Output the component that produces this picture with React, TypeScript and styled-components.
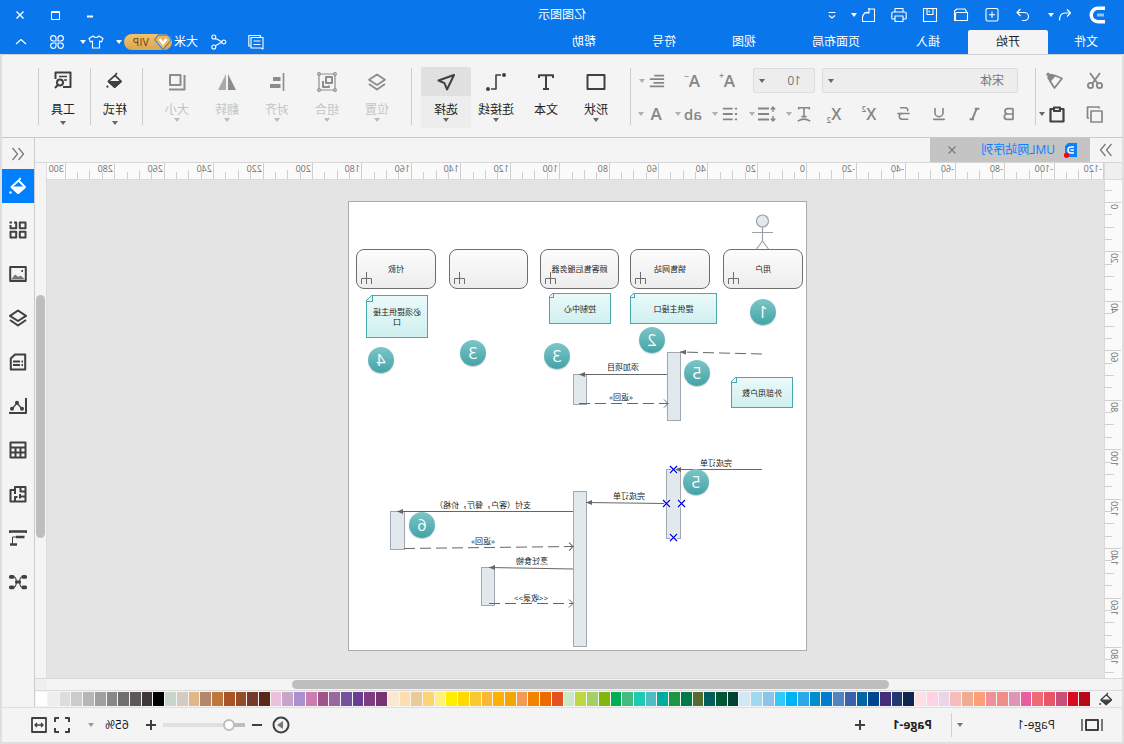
import React from "react";
import styled, { createGlobalStyle, css } from "styled-components";
import { Bold, Underline, Strikethrough } from "lucide-react";

const GlobalStyle = createGlobalStyle`
  *, *::before, *::after { box-sizing: border-box; }
  body { margin: 0; background: #f4f4f4; }
  button, select, input {
    font: inherit;
    color: inherit;
    margin: 0;
    padding: 0;
    border: 0;
    background: none;
  }
`;

const blue = "#0977eb";
const dark = "#404040";
const mid = "#868686";
const line = "#d0d0d0";

/* ---------- shell ---------- */

/* The whole window is shown flipped left to right. */
const Window = styled.div`
  display: flex;
  flex-direction: column;
  min-height: 100vh;
  overflow: hidden;
  transform: scaleX(-1);
  background: #f4f4f4;
  color: #222;
  font: 12px/16px "Open Sans", "Noto Sans CJK SC", sans-serif;
`;

const Header = styled.header`
  background: ${blue};
  color: #fff;
`;

const TitleRow = styled.div`
  display: grid;
  grid-template-columns: 1fr auto 1fr;
  align-items: center;
  height: 30px;
`;

const QuickBar = styled.div`
  display: flex;
  align-items: center;
  gap: 15px;
  padding-left: 18px;
`;

const Split = styled.div<{ $gap?: number }>`
  display: flex;
  align-items: center;
  gap: ${(p) => p.$gap ?? 1}px;
`;

const Title = styled.h1`
  margin: 0;
  font-size: 12px;
  font-weight: 400;
`;

const WindowControls = styled.div`
  display: flex;
  justify-content: flex-end;
  padding-right: 3px;
`;

const IconButton = styled.button<{ $w?: number; $before?: number; $color?: string }>`
  display: flex;
  flex: none;
  align-items: center;
  justify-content: center;
  width: ${(p) => p.$w ?? 16}px;
  height: 24px;
  margin-left: ${(p) => p.$before ?? 0}px;
  color: ${(p) => p.$color ?? "inherit"};
  white-space: nowrap;
`;

const MenuRow = styled.nav`
  display: flex;
  align-items: stretch;
  height: 24px;
`;

const MenuTab = styled.button<{ $active?: boolean; $first?: boolean }>`
  padding: 0 ${(p) => (p.$first ? 26 : 28)}px;
  ${(p) =>
    p.$active &&
    css`
      background: #f4f4f4;
      color: #222;
      border-radius: 2px 2px 0 0;
    `}
`;

const Account = styled.div`
  display: flex;
  align-items: center;
  margin-left: auto;
  padding-right: 13px;
`;

const UserName = styled.span`
  margin: 0 2px 0 13px;
`;

const VipBadge = styled.button`
  display: flex;
  align-items: center;
  gap: 5px;
  width: 48px;
  height: 16px;
  border-radius: 8px;
  background: linear-gradient(#f3c26c, #d9a653);
  color: #6b4410;
  font-size: 11px;
`;

const CaretShape = styled.span<{ $color: string }>`
  width: 0;
  height: 0;
  border: 3px solid transparent;
  border-top: 4px solid ${(p) => p.$color};
  border-bottom: 0;
`;

const Caret = ({ color = "#fff", label = "更多" }: { color?: string; label?: string }) => (
  <IconButton $w={10} aria-label={label}>
    <CaretShape $color={color} />
  </IconButton>
);

/* ---------- ribbon ---------- */

const Ribbon = styled.div`
  display: flex;
  align-items: flex-start;
  height: 84px;
  padding-top: 12px;
  border: 2px solid #dfdfdf;
  border-width: 1px 2px;
  border-top-color: ${line};
  border-bottom-color: #c9c9c9;
`;

const Divider = styled.i`
  flex: none;
  width: 1px;
  height: 57px;
  margin-top: 1px;
  background: #cdcdcd;
`;

const ToolRows = styled.div<{ $w: number; $pad: number }>`
  display: flex;
  flex: none;
  flex-direction: column;
  gap: 8px;
  width: ${(p) => p.$w}px;
  padding: 1px 0 0 ${(p) => p.$pad}px;
`;

const ToolRow = styled.div<{ $gap: number }>`
  display: flex;
  align-items: center;
  gap: ${(p) => p.$gap}px;
  height: 25px;
  color: ${mid};
`;

const LetterTools = styled(ToolRow)`
  padding-right: 4px;
`;

const SelectBox = styled.div<{ $w: number }>`
  position: relative;
  flex: none;
  width: ${(p) => p.$w}px;

  select {
    appearance: none;
    width: 100%;
    height: 25px;
    padding-left: 13px;
    border: 1px solid #dcdce0;
    border-radius: 2px;
    background: #ededed;
    color: #777;
  }

  span {
    position: absolute;
    top: 11px;
    right: 6px;
    pointer-events: none;
  }
`;

const Letter = styled.span<{ $size?: number }>`
  font: 600 ${(p) => p.$size ?? 17}px/20px "Open Sans", sans-serif;

  sup, sub {
    font-size: 8px;
    line-height: 8px;
  }
  sup { vertical-align: 8px; }
  sub { vertical-align: -3px; }
`;

const BigGroup = styled.div<{ $gap?: number }>`
  display: flex;
  flex: none;
  margin: 0 ${(p) => (p.$gap === undefined ? 9 : 0)}px 0 ${(p) => p.$gap ?? 9}px;
`;

const BigButton = styled.button<{ $active?: boolean; $muted?: boolean; $w?: number; $gap?: number }>`
  display: flex;
  flex-direction: column;
  align-items: center;
  gap: ${(p) => p.$gap ?? 0}px;
  width: ${(p) => p.$w ?? 50}px;
  height: 61px;
  border-radius: 2px;
  color: ${(p) => (p.$muted ? "#c4c4c4" : "#222")};
  background: ${(p) => (p.$active ? "linear-gradient(#e0e0e0 29px, #ededed 29px)" : "none")};
`;

const BigIcon = styled.span<{ $muted?: boolean; $h?: number }>`
  display: flex;
  align-items: center;
  justify-content: center;
  height: ${(p) => p.$h ?? 29}px;
  margin-bottom: 6px;
  color: ${(p) => (p.$muted ? "#8c8c8c" : dark)};
`;

/* ---------- workspace ---------- */

const Body = styled.div`
  display: flex;
  flex: 1;
  border: 0 solid #dfdfdf;
  border-width: 0 2px;
`;

const Main = styled.main`
  display: flex;
  flex: 1;
  flex-direction: column;
  min-width: 0;
`;

const DocTabs = styled.div`
  display: flex;
  height: 25px;
  border-bottom: 1px solid #d8d8d8;
`;

const DocTab = styled.div`
  display: flex;
  align-items: center;
  width: 160px;
  padding: 0 14px 0 12px;
  background: #c4c4c4;
  color: #0a80ff;

  span { margin: 0 auto 0 9px; }
`;

const Workspace = styled.div`
  display: grid;
  flex: 1;
  grid-template-columns: 18px 1fr 12px;
  grid-template-rows: 17px 1fr;
  min-height: 0;
`;

const Corner = styled.div`
  background: #efefef;
  border: 1px solid #dadada;
  border-width: 0 1px 1px 0;
`;

const HRuler = styled.div`
  display: flex;
  contain: size;
  overflow: hidden;
  background: #fafafa;
  border-bottom: 1px solid #dadada;
`;

const VRuler = styled.div`
  display: flex;
  flex-direction: column;
  contain: size;
  padding-top: 10px;
  overflow: hidden;
  background: #fafafa;
  border-right: 1px solid #dadada;
`;

const tickLength = [16, 7, 9, 7];

const HCell = styled.span<{ $kind: number }>`
  position: relative;
  flex: none;
  background: linear-gradient(#cfcfcf, #cfcfcf) left bottom / 1px ${(p) => tickLength[p.$kind]}px no-repeat;
`;

const VCell = styled.span<{ $kind: number }>`
  position: relative;
  flex: none;
  background: linear-gradient(#cfcfcf, #cfcfcf) right top / ${(p) => tickLength[p.$kind]}px 1px no-repeat;
`;

const RulerText = styled.span<{ $vertical?: boolean }>`
  position: absolute;
  top: ${(p) => (p.$vertical ? 2 : 0)}px;
  left: 2px;
  color: #707070;
  font-size: 9px;
  line-height: 11px;
  ${(p) =>
    p.$vertical &&
    css`
      writing-mode: vertical-rl;
      transform: rotate(180deg);
    `}
`;

const VScroll = styled.div`
  display: grid;
  grid-row: 1 / 3;
  grid-column: 3;
  grid-template-rows: 132fr 243fr 140fr;
  padding: 0 1px;
  border-left: 1px solid #dedede;
`;

const HScroll = styled.div`
  display: grid;
  grid-template-columns: 233fr 597fr 245fr 12px;
  height: 13px;
  border: 0 solid #dadada;
  border-width: 1px 0;
`;

const Thumb = styled.i<{ $col?: boolean }>`
  grid-area: ${(p) => (p.$col ? "1 / 2" : "2 / 1")};
  margin: ${(p) => (p.$col ? "1px 0" : "0")};
  border-radius: 5px;
  background: #bebebe;
`;

const ScrollCorner = styled.i`
  grid-area: 1 / 4;
  background: #efefef;
`;

const Canvas = styled.div`
  min-width: 0;
  padding: 21px 0 27px 297px;
  overflow: hidden;
  background: #e4e4e4;
`;

const Page = styled.div`
  position: relative;
  width: 459px;
  height: 450px;
  border: 1px solid #ababab;
  background: #fff;
  color: #222;
  font-size: 8px;
  line-height: 10px;
`;

interface Place {
  $x: number;
  $y: number;
  $w: number;
  $h: number;
}

const placed = css<Place>`
  position: absolute;
  left: ${(p) => p.$x}px;
  top: ${(p) => p.$y}px;
  width: ${(p) => p.$w}px;
  height: ${(p) => p.$h}px;
`;

const Lifeline = styled.div<Place>`
  ${placed}
  display: flex;
  align-items: center;
  justify-content: center;
  border: 1px solid #6e6e6e;
  border-radius: 8px;
  background: linear-gradient(#fcfcfc, #ededed);

  svg {
    position: absolute;
    right: 4px;
    bottom: 4px;
  }
`;

const Note = styled.div<Place & { $ear: number }>`
  ${placed}
  display: flex;
  align-items: center;
  justify-content: center;
  padding: 0 4px;
  border: 1px solid #4aa8ab;
  background: linear-gradient(#ebf9f9, #cff0f0);
  text-align: center;

  &::after {
    content: "";
    position: absolute;
    top: -1px;
    right: -1px;
    width: ${(p) => p.$ear}px;
    height: ${(p) => p.$ear}px;
    border: 1px solid #4aa8ab;
    border-width: 0 0 1px 1px;
    background: linear-gradient(45deg, #ebf9f9 45%, #4aa8ab 45% 58%, #fff 58%);
  }
`;

const Activation = styled.div<Place>`
  ${placed}
  border: 1px solid #a0a6b2;
  background: #e1e9ec;
`;

const Badge = styled.div<{ $x: number; $y: number }>`
  position: absolute;
  left: ${(p) => p.$x - 13}px;
  top: ${(p) => p.$y - 13}px;
  width: 26px;
  height: 26px;
  border-radius: 50%;
  background: linear-gradient(#7cc6c8, #43a3a7);
  box-shadow: 0 1px 1px #0003;
  color: #fff;
  font: 16px/26px "Open Sans", sans-serif;
  text-align: center;
`;

const Message = styled.span<{ $x: number; $y: number }>`
  position: absolute;
  left: ${(p) => p.$x - 60}px;
  top: ${(p) => p.$y - 5}px;
  width: 120px;
  text-align: center;
`;

const Overlay = styled.svg`
  position: absolute;
  inset: 0;
`;

/* ---------- side, palette, status ---------- */

const Sidebar = styled.aside`
  display: flex;
  flex: none;
  flex-direction: column;
  gap: 10px;
  width: 33px;
  border-left: 1px solid #cbcbcb;
`;

const SideToggle = styled.button`
  display: flex;
  align-items: center;
  justify-content: center;
  height: 31px;
  margin-bottom: -10px;
  color: #777;
`;

const SideButton = styled.button<{ $active?: boolean }>`
  display: flex;
  align-items: center;
  justify-content: center;
  height: 34px;
  background: ${(p) => (p.$active ? "#0080ff" : "none")};
  color: ${(p) => (p.$active ? "#fff" : dark)};
`;

const Palette = styled.div`
  display: flex;
  height: 16px;
  padding: 1px 1px 1px 0;
`;

const PaletteIcon = styled.button`
  display: flex;
  flex: none;
  align-items: center;
  justify-content: center;
  width: 32px;
  color: ${dark};
`;

const Swatches = styled.div`
  display: flex;
  flex: 1;
  gap: 1px;
`;

const Swatch = styled.button<{ $fill: string }>`
  flex: 1;
  background: ${(p) => p.$fill};
`;

const Status = styled.footer`
  display: flex;
  align-items: center;
  height: 37px;
  border: 2px solid #dfdfdf;
  border-top-width: 1px;
  color: #222;
`;

const PageTab = styled.button<{ $bold?: boolean; $w: number; $pad?: number }>`
  width: ${(p) => p.$w}px;
  padding-left: ${(p) => p.$pad ?? 0}px;
  text-align: left;
  font-weight: ${(p) => (p.$bold ? 700 : 400)};
`;

const StatusDivider = styled.i`
  width: 1px;
  height: 24px;
  margin: 0 19px 0 3px;
  background: ${line};
`;

const ZoomTools = styled.div`
  display: flex;
  align-items: center;
  margin-left: auto;
  padding-right: 29px;
`;

const Slider = styled.input`
  appearance: none;
  width: 82px;
  height: 12px;
  margin: 0 4px;
  background: linear-gradient(90deg, #bebebe 16px, #dfdfdf 16px) center / 100% 4px no-repeat;

  &::-webkit-slider-thumb {
    appearance: none;
    width: 12px;
    height: 12px;
    border: 2px solid #bebebe;
    border-radius: 50%;
    background: #fff;
  }
`;

const ZoomValue = styled.span`
  margin: 0 9px 0 14px;
  color: #111;
`;

/* ---------- icons ---------- */

const Glyph = ({
  children,
  size = 18,
  sw = 2,
  box = 18,
}: {
  children: React.ReactNode;
  size?: number;
  sw?: number;
  box?: number;
}) => (
  <svg
    width={size}
    height={size}
    viewBox={`0 0 ${box} ${box}`}
    fill="none"
    stroke="currentColor"
    strokeWidth={sw}
    strokeLinejoin="round"
    aria-hidden
  >
    {children}
  </svg>
);

const Thin = ({ d, size = 16 }: { d: string; size?: number }) => (
  <Glyph size={size} box={16} sw={1.1}>
    <path d={d} />
  </Glyph>
);

const Bucket = ({ size = 18 }: { size?: number }) => (
  <Glyph size={size} sw={1.8}>
    <path d="M6.5 1 8.5 4 M8.5 3.5 2 10 8.8 16 15.5 10Z" />
    <path d="M2.5 10.5H15L8.8 16Z" fill="currentColor" />
    <circle cx="16.5" cy="15.5" r="1.2" fill="currentColor" stroke="none" />
  </Glyph>
);

const Layers = ({ sw = 2 }: { sw?: number }) => (
  <Glyph sw={sw}>
    <path d="M9 1.5 17 6.8 9 12 1 6.8Z M1 11 9 16.5 17 11" />
  </Glyph>
);

const quickIcons: [string, string][] = [
  ["重做", "M10.5 2 14 5.5 10.5 9 M14 5.5H6.5A3.6 3.6 0 0 0 6.5 13.5H9"],
  ["新建", "M3.5 1.5H12.5Q14 1.5 14 3V12.5Q14 14 12.5 14H3.5Q2 14 2 12.5V3Q2 1.5 3.5 1.5Z M8 4.5V11 M4.8 7.8H11.2"],
  ["打开", "M1.5 13.5V5.5H12Q13.5 5.5 13.5 7V13.5Z M2 5.5 4 2H12L14.5 4V13.5H13.5"],
  ["保存", "M1.5 1.5H14.5V14.5H1.5Z M5 1.5V7.5H11V1.5 M8.8 3.5V5.5"],
  ["打印", "M4 5V1.5H12V5 M4 12H1.5Q.8 12 .8 11V6.5Q.8 5 2.2 5H13.8Q15.2 5 15.2 6.5V11Q15.2 12 14.5 12H12 M4 9H12V14.5H4Z"],
];

const bigMain = [
  { label: "形状", icon: <Glyph size={20} box={20}><path d="M1.5 3H18.5V17H1.5Z" /></Glyph>, caret: true },
  { label: "文本", icon: <Glyph><path d="M2 5V2.2H16V5 M9 2.2V16 M6 16H12" /></Glyph>, caret: false },
  {
    label: "连接线",
    icon: (
      <Glyph size={20} box={20} sw={1.6}>
        <path d="M5 3H10V17H15" />
        <circle cx="2" cy="3" r="2" fill="currentColor" stroke="none" />
        <circle cx="18" cy="17" r="2" fill="currentColor" stroke="none" />
      </Glyph>
    ),
    caret: true,
  },
  { label: "选择", icon: <Glyph><path d="M1 2 16.5 7.5 10.5 10.2 8 16.5Z" /></Glyph>, caret: true, active: true },
];

const bigArrange = [
  { label: "位置", icon: <Layers sw={1.8} /> },
  {
    label: "组合",
    icon: (
      <Glyph size={20} box={20} sw={1.2}>
        <path d="M2 2H18V18H2Z" />
        <path d="M5 5H11V11H5Z M14 9V15H8V13.5" strokeWidth="2" />
        <g fill="#f4f4f4">
          <circle cx="2" cy="2" r="1.3" />
          <circle cx="18" cy="2" r="1.3" />
          <circle cx="2" cy="18" r="1.3" />
          <circle cx="18" cy="18" r="1.3" />
        </g>
      </Glyph>
    ),
  },
  {
    label: "对齐",
    icon: (
      <Glyph sw={1.6}>
        <path d="M2.5 0V18" />
        <path d="M5.5 6H13 M5.5 13H16" strokeWidth="4" />
      </Glyph>
    ),
  },
  {
    label: "翻转",
    icon: (
      <Glyph sw={0}>
        <path d="M8 1V17H0Z" fill="currentColor" />
        <path d="M10 1V17H18Z" fill="#aaa" />
      </Glyph>
    ),
  },
  { label: "大小", icon: <Glyph><path d="M5.5 2H16V12H5.5Z M1.5 2V16.5H17" /></Glyph> },
];

const bigTools = [
  { label: "样式", icon: <Bucket size={17} /> },
  {
    label: "工具",
    icon: (
      <Glyph>
        <path d="M9 16H1.5V1.5H16.5V8" />
        <path d="M5 5.5H13 M5 9H8" strokeWidth="1.6" />
        <circle cx="12" cy="11.5" r="3" />
        <path d="M14 13.8 17 17" />
      </Glyph>
    ),
  },
];

const sideIcons: [string, React.ReactNode][] = [
  ["填充", <Bucket />],
  [
    "符号库",
    <Glyph>
      <path d="M1.5 1.5H7.2V7.2H1.5Z M1.5 10.8H7.2V16.5H1.5Z M10.8 10.8H16.5V16.5H10.8Z M13 1.5H10.8V7.2H16.5V4 M16.5 2.5V.5 M15 1.5H17" />
    </Glyph>,
  ],
  [
    "图片",
    <Glyph>
      <path d="M1.2 2H16.8V16H1.2Z" />
      <path d="M2 14.5 6.5 10.5 8.5 12 12 9.5 16 14.5Z" fill="currentColor" stroke="none" opacity=".7" />
      <path d="M4 6H5.6" />
    </Glyph>,
  ],
  ["图层", <Layers />],
  [
    "属性",
    <Glyph>
      <path d="M1.8 1.5H12L16.2 5.5V16.5H1.8Z" />
      <path d="M4 8.5H5.5 M7 8.5H14 M4 12H5.5 M7 12H14" strokeWidth="1.8" />
    </Glyph>,
  ],
  [
    "图表",
    <Glyph>
      <path d="M1 1V16H18" />
      <path d="M5 12 10 6 15 12" strokeWidth="1.2" />
      <g fill="currentColor" stroke="none">
        <circle cx="5" cy="11.8" r="2" />
        <circle cx="10" cy="5.8" r="2" />
        <circle cx="15" cy="11.8" r="2" />
      </g>
    </Glyph>,
  ],
  ["表格", <Glyph><path d="M1.5 1.5H16.5V16.5H1.5Z M1.5 6.5H16.5 M1.5 11.5H16.5 M6.5 6.5V16.5 M11.5 6.5V16.5" /></Glyph>],
  [
    "平面图",
    <Glyph>
      <path d="M1.5 2H12V5H16.5V16.5H1.5Z M6.5 2V6.5H1.5 M12 5V9 M1.5 11.5H7V9 M7 11.5V13.5 M12 16V12H9.5" />
    </Glyph>,
  ],
  [
    "甘特图",
    <Glyph>
      <path d="M.5 4V2.5H17.5V4" strokeWidth="2.4" />
      <path d="M2.5 8H11 M10 15.5H17" strokeWidth="2.6" />
      <path d="M10 8H14.5V15" strokeWidth="1" />
    </Glyph>,
  ],
  [
    "思维导图",
    <Glyph sw={1.2}>
      <path d="M2 4H5Q7 4 7.5 9 7 14 5 14H2 M16 4H13Q11 4 10.5 9 11 14 13 14H16" />
      <g fill="currentColor" stroke="none">
        <rect x="0" y="2" width="5.5" height="3.8" rx="1.5" />
        <rect x="12.5" y="2" width="5.5" height="3.8" rx="1.5" />
        <rect x="0" y="12.5" width="5.5" height="3.8" rx="1.5" />
        <rect x="12.5" y="12.5" width="5.5" height="3.8" rx="1.5" />
        <rect x="6" y="7.6" width="6" height="3" rx="1" />
      </g>
    </Glyph>,
  ],
];

/* ---------- data ---------- */

const swatches = (
  "b80916 da0b1e c9507a e8566a ed6c74 e75f9e e095b8 ef8f88 f09098 ff9f78 f0ab94 f6bdbb ebd5e8 ffd3e5 ffdfe4 " +
  "0f244e 223a72 432d79 00468f 0067a6 3d62ad 5483c4 007dcf 008ed0 2ea8e4 00b3f3 33c9fc 8bc3ed 9fd9ef " +
  "cfe9f6 004233 005733 005f5b 556b2f 007a49 1c9641 00ac9f 50bdc4 19ccb2 45ba7d 00af53 80b70f a4d065 bfd743 cde8c6 " +
  "e3521f ed6a00 f08300 f39a55 f2a600 ffb000 fdb735 fac931 ffd900 ffee00 fff17f ffd573 eacb96 ffdeae fce8d0 793270 " +
  "7f3c84 674095 73539a 9a679f 9e5688 cd7caf a991cf c7a4c9 eac0db 5a2819 743a2e 934d29 a85424 c0773e b4866b dfb886 " +
  "d5cac4 c9d4ca 000000 3f3839 5a5859 6e7070 888888 9fa09f b5b6b6 cacccb dcdddd eeeeee ffffff"
).split(" ");

const tickStep = 12.36;

const ruler = (from: number, count: number, origin: number) =>
  Array.from({ length: count }, (_, i) => {
    const k = from + i;
    return {
      k,
      kind: ((k % 4) + 4) % 4,
      size: Math.round((k + 1) * tickStep) - Math.round(k * tickStep),
      label: origin + k * 5,
    };
  });

const lifelines: [number, number, string][] = [
  [3, 80, "用户"],
  [96, 80, "销售网站"],
  [187, 79, "顾客售后服务器"],
  [278, 79, ""],
  [370, 80, "付款"],
];

const notes: [number, number, number, number, string, number][] = [
  [89, 91, 87, 31, "提供主接口", 5],
  [195, 91, 62, 31, "控制中心", 5],
  [378, 93, 62, 43, "必须提供主接口", 7],
  [13, 175, 62, 31, "外部用户数", 6],
];

const activations: [number, number, number, number][] = [
  [125, 150, 14, 69],
  [219, 172, 14, 31],
  [125, 267, 15, 70],
  [219, 289, 14, 156],
  [401, 309, 15, 39],
  [311, 365, 14, 39],
];

const badges: [number, number, number][] = [
  [43, 110, 1],
  [154, 138, 2],
  [249, 154, 3],
  [333, 151, 3],
  [425, 158, 4],
  [109, 171, 5],
  [110, 280, 5],
  [384, 323, 6],
];

const messages: [number, number, string][] = [
  [183, 165, "添加项目"],
  [185, 195, "«返回»"],
  [90, 261, "完成订单"],
  [177, 294, "完成订单"],
  [323, 303, "支付（客户，餐厅，价格）"],
  [323, 339, "«返回»"],
  [274, 359, "烹饪食物"],
  [275, 396, "<<收录>>"],
];

const solidArrows = [
  "M139 172.5H227",
  "M44 267.5H131",
  "M140 301.5 220 300.5",
  "M233 309.5H409",
  "M233 367 317 365.5",
];
const replyArrows = ["M227 201.5H138", "M402 346.5 233 344.5", "M317 401.5H233"];
const handles: [number, number][] = [
  [133, 267],
  [133, 335],
  [140, 301],
  [125, 301],
];

const Diagram = () => (
  <Page>
    {lifelines.map(([x, w, text]) => (
      <Lifeline key={x} $x={x} $y={47} $w={w} $h={40}>
        {text}
        <svg width="11" height="12" fill="none" stroke="#6e6e6e" aria-hidden>
          <path d="M5.5 0V12 M.5 12V6.5H10.5V12" />
        </svg>
      </Lifeline>
    ))}
    {notes.map(([x, y, w, h, text, ear]) => (
      <Note key={text} $x={x} $y={y} $w={w} $h={h} $ear={ear}>
        {text}
      </Note>
    ))}
    {activations.map(([x, y, w, h]) => (
      <Activation key={`${x}-${y}`} $x={x} $y={y} $w={w} $h={h} />
    ))}
    <Overlay width="457" height="448" fill="none" stroke="#666" aria-hidden>
      <defs>
        <marker id="solid" markerWidth="7" markerHeight="6" refX="6" refY="3" orient="auto" markerUnits="userSpaceOnUse">
          <path d="M0 .5 6 3 0 5.5Z" fill="#666" stroke="none" />
        </marker>
        <marker id="open" markerWidth="7" markerHeight="9" refX="5" refY="4.5" orient="auto" markerUnits="userSpaceOnUse">
          <path d="M1 .5 5 4.5 1 8.5" fill="none" stroke="#666" />
        </marker>
      </defs>
      <g stroke="#9aa0ac" strokeWidth="1.2">
        <circle cx="43.5" cy="19" r="6" fill="#e1e9ec" />
        <path d="M43.5 25V39 M33 30.5H54 M43.5 39 37.5 47 M43.5 39 49.5 47" />
      </g>
      <path d="M44 152 126 150" strokeDasharray="11 5" markerEnd="url(#solid)" />
      {solidArrows.map((d) => (
        <path key={d} d={d} markerEnd="url(#solid)" />
      ))}
      {replyArrows.map((d) => (
        <path key={d} d={d} strokeDasharray="11 5" markerEnd="url(#open)" />
      ))}
      {handles.map(([x, y]) => (
        <g key={`${x}-${y}`}>
          <path d={`M${x - 4} ${y - 3}l7 7m0-7l-7 7`} stroke="#fff" strokeWidth="3" />
          <path d={`M${x - 4} ${y - 3}l7 7m0-7l-7 7`} stroke="#0000d8" strokeWidth="1.2" />
        </g>
      ))}
    </Overlay>
    {badges.map(([x, y, n]) => (
      <Badge key={`${x}-${y}`} $x={x} $y={y}>
        {n}
      </Badge>
    ))}
    {messages.map(([x, y, text]) => (
      <Message key={`${x}-${y}`} $x={x} $y={y}>
        {text}
      </Message>
    ))}
  </Page>
);

const SplitTool = ({ label, children }: { label: string; children: React.ReactNode }) => (
  <Split>
    <IconButton $w={18} aria-label={label}>
      {children}
    </IconButton>
    <Caret color="#b0b0b0" label={`${label}选项`} />
  </Split>
);

export default function App() {
  return (
    <Window>
      <GlobalStyle />
      <Header>
        <TitleRow>
          <QuickBar>
            <svg width="18" height="18" viewBox="0 0 18 18" fill="none" aria-hidden>
              <path d="M1 2.2H8A6.3 6.3 0 0 1 8 15.8H1" stroke="#fff" strokeWidth="3.4" />
              <path d="M2 9H9" stroke="#8cc4ff" strokeWidth="3" />
            </svg>
            <Split>
              <IconButton aria-label="撤销">
                <Thin d="M6 2.5 2.5 6 6 9.5 M2.5 6H8Q13.5 6 13.5 13.5" />
              </IconButton>
              <Caret />
            </Split>
            {quickIcons.map(([label, d]) => (
              <IconButton key={label} aria-label={label}>
                <Thin d={d} />
              </IconButton>
            ))}
            <Split>
              <IconButton aria-label="导出">
                <Thin d="M8 2H1.5V14.5H13.5V10 M7 1V6H12 M7.5 5.5Q12 4.5 13.5 10" />
              </IconButton>
              <Caret />
              <IconButton $before={8} aria-label="自定义">
                <Thin d="M4.5 5.5H11.5 M5 8.5 8 11 11 8.5" />
              </IconButton>
            </Split>
          </QuickBar>
          <Title>亿图图示</Title>
          <WindowControls>
            <IconButton $w={35} aria-label="最小化">
              <Glyph size={10} box={10}><path d="M2 6.5H8" /></Glyph>
            </IconButton>
            <IconButton $w={35} aria-label="最大化">
              <Glyph size={9} box={9} sw={1}><path d="M.5 .5H8.5V8.5H.5Z M.5 1.5H8.5" /></Glyph>
            </IconButton>
            <IconButton $w={35} aria-label="关闭">
              <Glyph size={10} box={10} sw={1.4}><path d="M1.5 1.5 8.5 8.5 M8.5 1.5 1.5 8.5" /></Glyph>
            </IconButton>
          </WindowControls>
        </TitleRow>
        <MenuRow>
          <MenuTab $first>文件</MenuTab>
          <MenuTab $active>开始</MenuTab>
          {["插入", "页面布局", "视图", "符号", "帮助"].map((t) => (
            <MenuTab key={t}>{t}</MenuTab>
          ))}
          <Account>
            <IconButton aria-label="消息">
              <Thin d="M3.5 3V1.5H15.2V12H13.5 M1 3.5H13V14H3L1 15Z M3.5 7H10.5 M3.5 10.5H10.5" />
            </IconButton>
            <IconButton $before={21} aria-label="分享">
              <Thin d="M5 8 12 4 M5 8 12 12 M1.2 8A2 2 0 1 0 5.2 8A2 2 0 1 0 1.2 8 M11.2 3A2 2 0 1 0 15.2 3A2 2 0 1 0 11.2 3 M11.2 13A2 2 0 1 0 15.2 13A2 2 0 1 0 11.2 13" />
            </IconButton>
            <UserName>大米</UserName>
            <VipBadge>
              <svg width="18" height="16" viewBox="0 0 18 16" aria-hidden>
                <path d="M4 1H14L17.3 6 9 15.5 .7 6Z" fill="#e9b660" stroke={blue} />
                <path d="M5.5 5 9 9.5 12.5 5" fill="none" stroke="#fff" strokeWidth="2.4" />
              </svg>
              VIP
            </VipBadge>
            <Caret />
            <IconButton $before={10} aria-label="主题">
              <Thin d="M5 2 1 4.5 2.5 8 4.5 7V14H11.5V7L13.5 8 15 4.5 11 2Q8 5 5 2Z" />
            </IconButton>
            <Caret />
            <IconButton $before={13} aria-label="应用">
              <Thin d="M7 7H4A2.7 2.7 0 1 1 7 4Z M9 7H12A2.7 2.7 0 1 0 9 4Z M7 9H4A2.7 2.7 0 1 0 7 12Z M9 9H12A2.7 2.7 0 1 1 9 12Z" />
            </IconButton>
            <IconButton $before={20} aria-label="收起">
              <Thin d="M3 10 8 5.5 13 10" />
            </IconButton>
          </Account>
        </MenuRow>
      </Header>

      <Ribbon>
        <ToolRows $w={86} $pad={18}>
          <ToolRow $gap={22}>
            <IconButton $w={18} aria-label="剪切">
              <Glyph sw={1.8}>
                <path d="M4 1 12 12 M14 1 6 12" />
                <circle cx="4.5" cy="13.5" r="2.6" />
                <circle cx="13.5" cy="13.5" r="2.6" />
              </Glyph>
            </IconButton>
            <IconButton $w={18} aria-label="格式刷">
              <Glyph sw={1.8}>
                <path d="M2 6.5 9 3.5 14 9 9.5 16Z" />
                <path d="M9 3 14.5 9.5 17 5.5 13 1.5Z" fill="currentColor" stroke="none" />
                <path d="M13.5 4.5 17 1.5" strokeWidth="3" />
              </Glyph>
            </IconButton>
          </ToolRow>
          <ToolRow $gap={20}>
            <IconButton $w={18} aria-label="复制">
              <Glyph sw={1.7}><path d="M2 6H13V17H2Z M5 3.5V2H16.5V13H15" /></Glyph>
            </IconButton>
            <Split>
              <IconButton $w={18} $color={dark} aria-label="粘贴">
                <Glyph sw={2.2}><path d="M5.5 4H2.5V16.5H15.5V4H12.5 M6 2.5H12V6H6Z" /></Glyph>
              </IconButton>
              <Caret color="#666" />
            </Split>
          </ToolRow>
        </ToolRows>
        <Divider />
        <ToolRows $w={404} $pad={17}>
          <ToolRow $gap={17}>
            <Split $gap={7}>
              <SelectBox $w={196}>
                <select aria-label="字体"><option>宋体</option></select>
                <CaretShape $color="#666" />
              </SelectBox>
              <SelectBox $w={62}>
                <select aria-label="字号"><option>10</option></select>
                <CaretShape $color="#666" />
              </SelectBox>
            </Split>
            <IconButton $w={18} aria-label="增大字号"><Letter>A<sup>+</sup></Letter></IconButton>
            <IconButton $w={18} aria-label="减小字号"><Letter>A<sup>−</sup></Letter></IconButton>
            <SplitTool label="对齐方式">
              <Glyph size={16}><path d="M1 3H12 M1 7H17 M1 11H13 M1 15H17" /></Glyph>
            </SplitTool>
          </ToolRow>
          <ToolRow $gap={8}>
            <LetterTools $gap={17}>
              <IconButton $w={18} aria-label="加粗"><Bold size={16} strokeWidth={2.6} /></IconButton>
              <IconButton $w={18} aria-label="斜体">
                <Glyph size={16} sw={2.2}><path d="M3 3H8 M6 3 11 15 M9 15H14" /></Glyph>
              </IconButton>
              <IconButton $w={18} aria-label="下划线"><Underline size={16} strokeWidth={2.4} /></IconButton>
              <IconButton $w={18} aria-label="删除线"><Strikethrough size={17} strokeWidth={2.2} /></IconButton>
              <IconButton $w={18} aria-label="上标"><Letter $size={16}>X<sup>2</sup></Letter></IconButton>
              <IconButton $w={18} aria-label="下标"><Letter $size={16}>X<sub>2</sub></Letter></IconButton>
            </LetterTools>
            <SplitTool label="文字效果">
              <Glyph size={16} sw={1.8}><path d="M3 4V2H15V4 M9 2V12 M6 12H12 M2 17Q9 12.5 16 17" /></Glyph>
            </SplitTool>
            <SplitTool label="行距">
              <Glyph sw={1.8}>
                <path d="M7 3.5H18 M7 9H18 M7 14.5H18" />
                <path d="M3 2V7 M.8 4.5 3 2 5.2 4.5 M3 11V16 M.8 13.5 3 16 5.2 13.5" strokeWidth="1.4" />
              </Glyph>
            </SplitTool>
            <SplitTool label="项目符号">
              <Glyph size={16}><path d="M6 3H17 M6 9H17 M6 15H17 M1 3H3.5 M1 9H3.5 M1 15H3.5" /></Glyph>
            </SplitTool>
            <SplitTool label="突出显示"><Letter $size={15}>ab</Letter></SplitTool>
            <SplitTool label="字体颜色"><Letter>A</Letter></SplitTool>
          </ToolRow>
        </ToolRows>
        <Divider />
        <BigGroup>
          {bigMain.map((b) => (
            <BigButton key={b.label} $active={b.active}>
              <BigIcon>{b.icon}</BigIcon>
              {b.label}
              {b.caret && <CaretShape $color="#666" />}
            </BigButton>
          ))}
        </BigGroup>
        <Divider />
        <BigGroup>
          {bigArrange.map((b) => (
            <BigButton key={b.label} $muted>
              <BigIcon $muted>{b.icon}</BigIcon>
              {b.label}
              <CaretShape $color="#bbb" />
            </BigButton>
          ))}
        </BigGroup>
        <Divider />
        {bigTools.map((b) => (
          <React.Fragment key={b.label}>
            <BigGroup $gap={3}>
              <BigButton $w={48} $gap={3}>
                <BigIcon $h={26}>{b.icon}</BigIcon>
                {b.label}
                <CaretShape $color="#666" />
              </BigButton>
            </BigGroup>
            <Divider />
          </React.Fragment>
        ))}
      </Ribbon>

      <Body>
        <Main>
          <DocTabs>
            <IconButton $w={32} $color="#777" aria-label="展开">
              <Glyph size={14} box={14} sw={1.2}><path d="M1.5 1 6.5 7 1.5 13 M7.5 1 12.5 7 7.5 13" /></Glyph>
            </IconButton>
            <DocTab>
              <svg width="14" height="15" viewBox="0 0 14 15" fill="none" aria-hidden>
                <path d="M1 0H10L13 3V14H1Z" fill="#0a80ff" />
                <path d="M4 4H7A3 3 0 0 1 7 10H4 M4 7H7.5" stroke="#fff" strokeWidth="1.6" />
                <circle cx="11.5" cy="12.3" r="2.6" fill="#f00" />
              </svg>
              <span>UML网站序列</span>
              <IconButton $w={16} $color="#777" aria-label="关闭标签">
                <Glyph size={8} box={8} sw={1.1}><path d="M.5 .5 7.5 7.5 M7.5 .5 .5 7.5" /></Glyph>
              </IconButton>
            </DocTab>
          </DocTabs>
          <Workspace>
            <Corner />
            <HRuler>
              {ruler(0, 85, -120).map((t) => (
                <HCell key={t.k} $kind={t.kind} style={{ width: t.size }}>
                  {t.kind === 0 && <RulerText>{t.label}</RulerText>}
                </HCell>
              ))}
            </HRuler>
            <VScroll>
              <Thumb />
            </VScroll>
            <VRuler>
              {ruler(-1, 40, 0).map((t) => (
                <VCell key={t.k} $kind={t.kind} style={{ height: t.size }}>
                  {t.kind === 0 && <RulerText $vertical>{t.label}</RulerText>}
                </VCell>
              ))}
            </VRuler>
            <Canvas>
              <Diagram />
            </Canvas>
          </Workspace>
          <HScroll>
            <Thumb $col />
            <ScrollCorner />
          </HScroll>
          <Palette>
            <PaletteIcon aria-label="填充颜色">
              <Bucket size={14} />
            </PaletteIcon>
            <Swatches>
              {swatches.map((c) => (
                <Swatch key={c} $fill={`#${c}`} aria-label={`#${c}`} />
              ))}
            </Swatches>
          </Palette>
        </Main>
        <Sidebar>
          <SideToggle aria-label="折叠">
            <Glyph size={14} box={14} sw={1.2}><path d="M6.5 1 1.5 7 6.5 13 M12.5 1 7.5 7 12.5 13" /></Glyph>
          </SideToggle>
          {sideIcons.map(([label, icon], i) => (
            <SideButton key={label} $active={i === 0} aria-label={label}>
              {icon}
            </SideButton>
          ))}
        </Sidebar>
      </Body>

      <Status>
        <IconButton $w={24} $before={18} $color={dark} aria-label="页面视图">
          <Glyph size={22} box={22}><path d="M5 6H17V16H5Z" /><path d="M1 5V17 M21 5V17" stroke="#777" /></Glyph>
        </IconButton>
        <PageTab $w={115} $pad={25}>Page-1</PageTab>
        <Caret color="#777" />
        <StatusDivider />
        <PageTab $bold $w={64}>Page-1</PageTab>
        <IconButton $color={dark} aria-label="添加页面">
          <Glyph size={10} box={10}><path d="M5 0V10 M0 5H10" /></Glyph>
        </IconButton>
        <ZoomTools>
          <IconButton $w={18} $color={dark} aria-label="演示">
            <Glyph><circle cx="9" cy="9" r="7.5" /><path d="M7 5 13 9 7 13Z" fill="#777" stroke="none" /></Glyph>
          </IconButton>
          <IconButton $before={7} $color={dark} aria-label="缩小">
            <Glyph size={10} box={10}><path d="M0 5H10" /></Glyph>
          </IconButton>
          <Slider type="range" min={0} max={100} defaultValue={14} aria-label="缩放" />
          <IconButton $color={dark} aria-label="放大">
            <Glyph size={10} box={10}><path d="M5 0V10 M0 5H10" /></Glyph>
          </IconButton>
          <ZoomValue>65%</ZoomValue>
          <Caret color="#999" />
          <IconButton $before={16} $color={dark} aria-label="全屏">
            <Glyph size={16} box={16}><path d="M1 5V1H5 M11 1H15V5 M15 11V15H11 M5 15H1V11" /></Glyph>
          </IconButton>
          <IconButton $before={7} $color={dark} aria-label="适合宽度">
            <Glyph size={16} box={16} sw={1.8}><path d="M1 1H15V15H1Z" /><path d="M4 8H12 M6 6 4 8 6 10 M10 6 12 8 10 10" strokeWidth="1.4" /></Glyph>
          </IconButton>
        </ZoomTools>
      </Status>
    </Window>
  );
}
